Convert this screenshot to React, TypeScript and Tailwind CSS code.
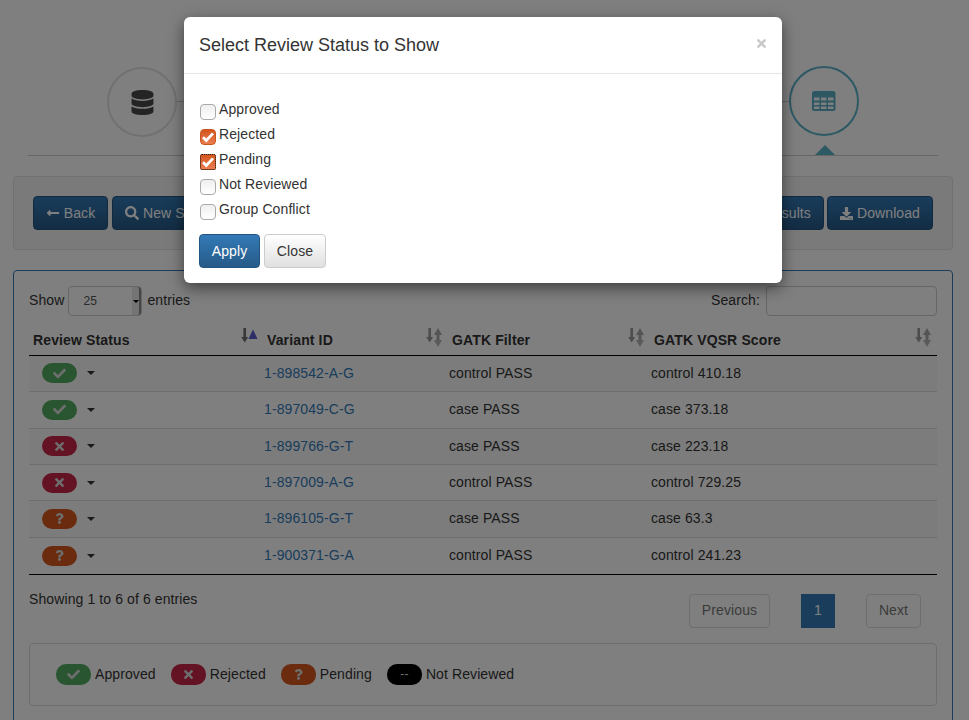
import { FaCheck, FaTimes, FaQuestion, FaDatabase, FaSearch, FaDownload, FaLongArrowAltLeft } from "react-icons/fa";
import type { ReactNode } from "react";

const rows = [
  ["g", "1-898542-A-G", "control PASS", "control 410.18"],
  ["g", "1-897049-C-G", "case PASS", "case 373.18"],
  ["r", "1-899766-G-T", "case PASS", "case 223.18"],
  ["r", "1-897009-A-G", "control PASS", "control 729.25"],
  ["o", "1-896105-G-T", "case PASS", "case 63.3"],
  ["o", "1-900371-G-A", "control PASS", "control 241.23"],
];

function Badge({ kind, small }: { kind: string; small?: boolean }) {
  const bg =
    kind === "g" ? "bg-[#52ad60]" : kind === "r" ? "bg-[#c9264a]" : kind === "o" ? "bg-[#d4561f]" : "bg-black";
  return (
    <span className={`inline-flex items-center justify-center w-[35px] rounded-[10px] text-[#dcdcdc] ${small ? "h-[21px]" : "h-[20px]"} ${bg}`}>
      {kind === "g" && <FaCheck className="text-[13px]" />}
      {kind === "r" && <FaTimes className="text-[13px]" />}
      {kind === "o" && <FaQuestion className="text-[11px]" />}
      {kind === "k" && <span className="text-[12px] leading-none">--</span>}
    </span>
  );
}

function Sort({ active }: { active?: boolean }) {
  const dark = active ? "#707070" : "#9a9a9a";
  return (
    <svg width="17" height="20" viewBox="0 0 17 20" className="block">
      <path d="M3.7 0v10" stroke={dark} strokeWidth="2.6" />
      <path d="M0.2 9h7L3.7 14.5z" fill={dark} />
      {active ? (
        <path d="M12 1.5l4.5 9.5h-9z" fill="#5a5ad0" />
      ) : (
        <>
          <path d="M12 0l4 7h-8z" fill="#a8a8a8" />
          <path d="M12 6v7" stroke="#a8a8a8" strokeWidth="3" />
          <path d="M8 12h8l-4 7z" fill="#b4b4b4" />
        </>
      )}
    </svg>
  );
}

function TableIcon() {
  return (
    <svg width="24" height="20" viewBox="0 0 24 20" className="block">
      <path
        fillRule="evenodd"
        fill="#58aec6"
        d="M2.500 0h18.500a2.500 2.500 0 0 1 2.500 2.500v15a2.500 2.500 0 0 1-2.500 2.500H2.500A2.500 2.500 0 0 1 0 17.500v-15A2.500 2.500 0 0 1 2.500 0zM2 6.500v3h5.500v-3zM9 6.500v3h5.500v-3zM16 6.500v3h5.500v-3zM2 11.500v2.500h5.500v-2.500zM9 11.500v2.500h5.500v-2.500zM16 11.500v2.500h5.500v-2.500zM2 15.500v2.500h5.500v-2.500zM9 15.500v2.500h5.500v-2.500zM16 15.500v2.500h5.500v-2.500z"
      />
    </svg>
  );
}

function Btn({ children, className = "px-[12px]" }: { children: ReactNode; className?: string }) {
  return (
    <button className={`h-[34px] rounded-[4px] border border-[#245580] bg-gradient-to-b from-[#337ab7] to-[#265a88] text-white text-[14px] flex items-center justify-center gap-[4px] ${className}`}>
      {children}
    </button>
  );
}

function Check({ label, checked, focus }: { label: string; checked?: boolean; focus?: boolean }) {
  return (
    <label className="h-[25px] flex items-start">
      <span
        className={`relative mt-[4px] w-[16px] h-[16px] flex items-center justify-center ${
          checked
            ? "bg-gradient-to-b from-[#d4551e] to-[#ea7d4e] border border-[#c9551f]"
            : "bg-gradient-to-b from-[#efefef] to-white border border-[#a9a9a9]"
        } ${focus ? "rounded-[2px] outline-1 outline-dotted outline-[#222] outline-offset-[-1px]" : "rounded-[4px]"}`}
      >
        {checked && (
          <svg width="14" height="12" viewBox="0 0 14 12">
            <path d="M2 6.200l3.300 3.300L12 2.400" fill="none" stroke="white" strokeWidth="2.800" />
          </svg>
        )}
      </span>
      <span className="ml-[3px] text-[14px] leading-[20px] -mt-[1px] text-[#333]">{label}</span>
    </label>
  );
}

export default function App() {
  return (
    <div className="relative h-[720px] overflow-hidden bg-white font-['Liberation_Sans',Arial,sans-serif] text-[14px] tracking-[0.1px] text-[#333]">
      <div className="h-[176px] pt-[66px] pl-[28px] pr-[31px]">
        <div className="h-[90px] border-b border-[#ccc] flex relative">
          <div className="ml-[79px] mt-[1px] w-[70px] h-[70px] rounded-full border-2 border-[#e2e2e2] flex items-center justify-center text-[#484848] text-[25px]">
            <FaDatabase />
          </div>
          <div className="flex-1 h-px mt-[35px] bg-[#ccc]" />
          <div className="mr-[79px] w-[70px] h-[70px] rounded-full border-2 border-[#5ab2ca] flex items-center justify-center">
            <TableIcon />
          </div>
          <div className="absolute right-[103px] bottom-0 w-0 h-0 border-x-[10px] border-x-transparent border-b-[10px] border-b-[#5ab2ca]" />
        </div>
      </div>

      <div className="ml-[13px] mr-[16px] h-[74px] rounded-[4px] border border-[#e3e3e3] bg-[#f5f5f5] px-[19px] flex items-center justify-between">
        <div className="flex gap-[4px]">
          <Btn className="w-[75px]"><FaLongArrowAltLeft /> Back</Btn>
          <Btn className="pl-[12px] pr-[12px] gap-[3px]"><FaSearch className="text-[14px]" /> New Search</Btn>
        </div>
        <div className="flex gap-[3px]">
          <Btn>Save Results</Btn>
          <Btn><FaDownload className="text-[13px]" /> Download</Btn>
        </div>
      </div>

      <div className="ml-[13px] mr-[16px] mt-[20px] h-[500px] rounded-t-[4px] border border-[#337ab7] px-[15px] pt-[15px]">
        <div className="flex justify-between items-center h-[30px]">
          <div className="flex items-center">
            <span className="-mt-[2px]">Show</span>
            <span className="relative ml-[4px] w-[74px] h-[30px] rounded-[4px] border border-[#ccc] bg-white pl-[14px] text-[12px] leading-[28px] text-[#555]">
              25
              <span className="absolute right-0 top-0 bottom-0 w-[9px] bg-[#e8e8e8] rounded-r-[3px] border-r-2 border-[#8a8a8a] flex items-center justify-center">
                <span className="w-0 h-0 border-x-[3px] border-x-transparent border-t-[3px] border-t-black" />
              </span>
            </span>
            <span className="ml-[5px] -mt-[2px]">entries</span>
          </div>
          <div className="flex items-center">
            <span className="-mt-[2px]">Search:</span>
            <span className="ml-[6px] w-[171px] h-[30px] rounded-[4px] border border-[#ccc] bg-white" />
          </div>
        </div>

        <div className="mt-[9px] grid grid-cols-[230px_185px_202px_291px] h-[31px] border-b border-black font-bold tracking-[0.13px] items-center">
          <div className="pl-[4px] pr-[1px] flex justify-between items-start h-full pt-[5px]"><span>Review Status</span><span className="-mt-[2px]"><Sort active /></span></div>
          <div className="pl-[8px] pr-[1px] flex justify-between items-start h-full pt-[5px]"><span>Variant ID</span><span className="-mt-[2px]"><Sort /></span></div>
          <div className="pl-[8px] pr-[1px] flex justify-between items-start h-full pt-[5px]"><span>GATK Filter</span><span className="-mt-[2px]"><Sort /></span></div>
          <div className="pl-[8px] pr-[5px] flex justify-between items-start h-full pt-[5px]"><span>GATK VQSR Score</span><span className="-mt-[2px]"><Sort /></span></div>
        </div>

        <div className="border-b border-black">
          {rows.map((r, i) => (
            <div key={r[1]} className={`grid grid-cols-[230px_185px_202px_291px] h-[36.33px] items-center border-[#ddd] ${i === 0 ? "pb-[1px]" : ""} ${i < 5 ? "border-b" : ""} ${i % 2 === 0 ? "bg-[#f9f9f9]" : ""}`}>
              <div className="pl-[13px] flex items-center">
                <Badge kind={r[0]} />
                <span className="ml-[10px] w-0 h-0 border-x-[4px] border-x-transparent border-t-[4px] border-t-[#333]" />
              </div>
              <div className="pl-[5px] text-[#337ab7]">{r[1]}</div>
              <div className="pl-[5px]">{r[2]}</div>
              <div className="pl-[5px]">{r[3]}</div>
            </div>
          ))}
        </div>

        <div className="flex justify-between mt-[14px] h-[48px]">
          <div className="leading-[20px]">Showing 1 to 6 of 6 entries</div>
          <div className="flex mr-[16px] mt-[5px] h-[34px]">
            <span className="w-[81px] rounded-[4px] border border-[#ddd] flex items-center justify-center text-[#777]">Previous</span>
            <span className="ml-[31px] w-[34px] bg-[#337ab7] text-white flex items-center justify-center">1</span>
            <span className="ml-[31px] w-[55px] rounded-[4px] border border-[#ddd] flex items-center justify-center text-[#777]">Next</span>
          </div>
        </div>

        <div className="mt-[6px] h-[63px] rounded-[4px] border border-[#ddd] px-[26px] flex items-center">
          <Badge kind="g" small /><span className="ml-[4px]">Approved</span>
          <span className="ml-[15px]" /><Badge kind="r" small /><span className="ml-[4px]">Rejected</span>
          <span className="ml-[15px]" /><Badge kind="o" small /><span className="ml-[4px]">Pending</span>
          <span className="ml-[15px]" /><Badge kind="k" small /><span className="ml-[4px]">Not Reviewed</span>
        </div>
      </div>

      <div className="absolute inset-0 bg-black/50" />

      <div className="absolute left-[184px] top-[17px] w-[598px] h-[266px] rounded-[6px] bg-white shadow-[0_5px_15px_rgba(0,0,0,0.5)]">
        <div className="h-[57px] border-b border-[#e5e5e5] pl-[15px] pr-[15px] flex items-center justify-between">
          <span className="text-[18px] tracking-normal text-[#333]">Select Review Status to Show</span>
          <FaTimes className="text-[13px] text-[#c9c9c9] -mt-[4px] -mr-[1px]" />
        </div>
        <div className="px-[15px] pt-[26px]">
          <div className="ml-[1px] flex flex-col">
            <Check label="Approved" />
            <Check label="Rejected" checked />
            <Check label="Pending" checked focus />
            <Check label="Not Reviewed" />
            <Check label="Group Conflict" />
          </div>
          <div className="flex gap-[4px] mt-[9px]">
            <button className="h-[34px] w-[61px] rounded-[4px] border border-[#245580] bg-gradient-to-b from-[#337ab7] to-[#265a88] text-white text-[14px]">Apply</button>
            <button className="h-[34px] w-[62px] rounded-[4px] border border-[#ccc] bg-gradient-to-b from-white to-[#e0e0e0] text-[#333] text-[14px]">Close</button>
          </div>
        </div>
      </div>
    </div>
  );
}
